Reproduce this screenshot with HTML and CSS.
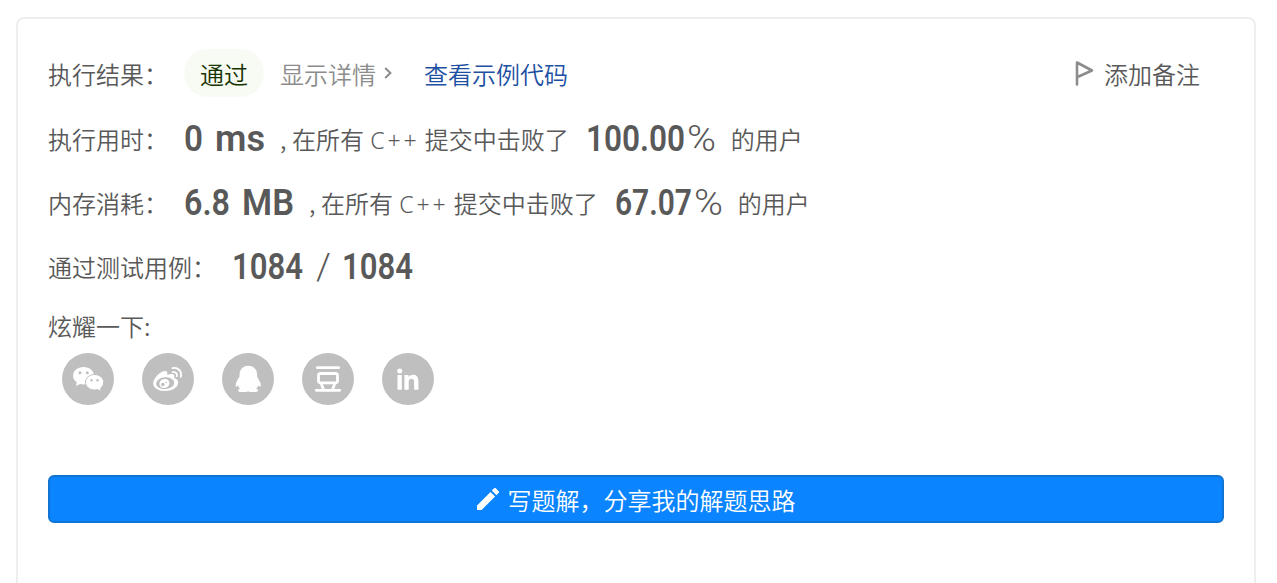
FILE: index.html
```html
<!DOCTYPE html>
<html lang="zh-CN">
<head>
    <meta charset="UTF-8">
    <meta name="viewport" content="width=device-width, initial-scale=1.0">
    <title>执行结果</title>
    <link rel="stylesheet" href="styles.css">
</head>
<body>
    <main class="result-card">
        <div class="row result-row">
            <span class="label">执行结果：</span>
            <span class="status">通过</span>
            <a class="detail-link">显示详情
                <svg class="chevron" viewBox="0 0 8 14"><path d="M1.2 2 6.4 7 1.2 12"/></svg>
            </a>
            <a class="code-link">查看示例代码</a>
            <a class="note-link">
                <svg class="flag" viewBox="0 0 20 26"><path d="M2 24.5V2.5L17 10.5 2.5 17"/></svg>
                添加备注
            </a>
        </div>

        <div class="row">
            <span class="label">执行用时：</span>
            <svg class="value" width="81" height="30"><text x="0" y="32" textLength="19" lengthAdjust="spacingAndGlyphs">0</text><text x="31" y="32" textLength="50" lengthAdjust="spacingAndGlyphs">ms</text></svg>
            <span class="desc"><span class="comma">,</span>在所有 <span class="lang">C++</span> 提交中击败了</span>
            <svg class="value" width="130" height="30"><text x="0" y="32" textLength="99" lengthAdjust="spacingAndGlyphs">100.00</text><text class="percent" x="101" y="32" textLength="29" lengthAdjust="spacingAndGlyphs">%</text></svg>
            <span class="desc">的用户</span>
        </div>

        <div class="row">
            <span class="label">内存消耗：</span>
            <svg class="value" width="110" height="30"><text x="0" y="32" textLength="46" lengthAdjust="spacingAndGlyphs">6.8</text><text x="58" y="32" textLength="52" lengthAdjust="spacingAndGlyphs">MB</text></svg>
            <span class="desc"><span class="comma">,</span>在所有 <span class="lang">C++</span> 提交中击败了</span>
            <svg class="value" width="108" height="30"><text x="0" y="32" textLength="77" lengthAdjust="spacingAndGlyphs">67.07</text><text class="percent" x="79" y="32" textLength="29" lengthAdjust="spacingAndGlyphs">%</text></svg>
            <span class="desc">的用户</span>
        </div>

        <div class="row">
            <span class="label">通过测试用例：</span>
            <svg class="value" width="182" height="30"><text x="0" y="32" textLength="71" lengthAdjust="spacingAndGlyphs">1084</text><text class="slash" x="84" y="32">/</text><text x="110" y="32" textLength="71" lengthAdjust="spacingAndGlyphs">1084</text></svg>
        </div>

        <div class="share-title">炫耀一下:</div>
        <div class="share-list">
            <a class="share-icon">
                <svg viewBox="0 0 52 52">
                    <path fill="#fff" d="M21.500 14C15.700 14 11 17.900 11 22.700c0 2.700 1.500 5 3.800 6.600L14 33l4-2c1.100.3 2.300.5 3.500.5 5.800 0 10.500-3.900 10.500-8.800S27.300 14 21.500 14z"/>
                    <path fill="#fff" stroke="#bfbfbf" stroke-width="1" d="M32.500 21.500c-5 0-9 3.400-9 7.700s4 7.800 9 7.800c1.100 0 2.200-.2 3.200-.5l3.600 2.100-.7-3.400c1.900-1.400 3.100-3.600 3.100-6 0-4.300-4.200-7.700-9.200-7.700z"/>
                    <g fill="#bfbfbf"><circle cx="18" cy="19.700" r="1.500"/><circle cx="25.300" cy="19.700" r="1.500"/><circle cx="29.500" cy="27.300" r="1.200"/><circle cx="35.500" cy="27.300" r="1.200"/></g>
                </svg>
            </a>
            <a class="share-icon">
                <svg viewBox="0 0 52 52">
                    <path fill="#fff" d="M23.500 18c1.800.2 2.200 1.600 1.500 3.800 3.500-1.300 7.300-1.400 7.500 1.200.1.700-.1 1.300-.4 2 2.700.8 4.300 2.400 4.100 5-.4 4.600-6.300 8-13.300 8-6.500 0-11.700-3.100-11.700-7.700 0-5.300 7.800-12.800 12.300-12.300z"/>
                    <ellipse cx="23.200" cy="30.200" rx="9.100" ry="5.900" fill="#bfbfbf" transform="rotate(-6 23.200 30.200)"/>
                    <ellipse cx="22.400" cy="30.500" rx="5.100" ry="4.400" fill="#fff" transform="rotate(-20 22.400 30.500)"/>
                    <circle cx="20.800" cy="31.500" r="1.800" fill="#bfbfbf"/><circle cx="24.200" cy="29.500" r=".8" fill="#bfbfbf"/>
                    <path class="line-thin" d="M30.500 15.200c5.300-1.300 9.900 3.200 8.200 8.700M30.700 19.200c2.700-.7 4.900 1.200 4.100 4"/>
                </svg>
            </a>
            <a class="share-icon">
                <svg viewBox="0 0 52 52">
                    <path fill="#fff" d="M26.300 12.700c-6.100 0-9 4.600-8.800 9.800.1 1.300-.5 1.500-.9 2.500-1.800 3-3.100 5.700-2.900 8 .1 1.100.7 1.100 2.200-.8.400 1.400 1.200 2.600 2.100 3.600-1.500.5-2 1.300-1.800 2.100.4 1.500 7.700 1.600 10 .3 2.200 1.300 9.300 1.200 9.900-.4.300-.9-.4-1.600-1.900-2.100 1-1 1.700-2.200 2.100-3.500 1.600 2 2.300 1.700 2.500.5.200-2.500-1.300-4.900-2.900-7.700-.4-.9-.9-1.300-.8-2.500.2-5.300-2.900-9.800-8.800-9.800z"/>
                </svg>
            </a>
            <a class="share-icon">
                <svg viewBox="0 0 52 52"><path class="line" d="M15.300 14.700h21.400M14.200 37.300h23.600M19.600 32l2 4.500M32.400 32l-2 4.500"/><rect class="line" x="16.500" y="20.500" width="19" height="9.300" rx="2"/></svg>
            </a>
            <a class="share-icon">
                <svg viewBox="0 0 52 52">
                    <circle cx="17.700" cy="17.900" r="2.500" fill="#fff"/>
                    <path fill="#fff" d="M15.500 22.100h4.300v14.700h-4.300zM22.400 22.100h4.200v2c2.700-3.700 9.800-3.200 9.800 3.700v9h-4.300v-8.300c0-4-5.400-3.500-5.400.2v8.100h-4.300z"/>
                </svg>
            </a>
        </div>

        <button class="write-button">
            <svg class="pencil" viewBox="3 3 18 18"><path fill="#fff" d="M3 17.250V21h3.750L17.810 9.940l-3.750-3.750L3 17.250zM20.710 7.040a1 1 0 0 0 0-1.410l-2.340-2.340a1 1 0 0 0-1.410 0l-1.830 1.830 3.750 3.750 1.830-1.830z"/></svg>
            写题解，分享我的解题思路
        </button>
    </main>
</body>
</html>
```
FILE: styles.css
```css
* {
    box-sizing: border-box;
}

body {
    margin: 0;
    padding: 17px 21px 0 16px;
    height: 100vh;
    background: #fff;
    color: #595959;
    font-family: "Noto Sans CJK SC", sans-serif;
    font-size: 24px;
    font-weight: 350;
}

.result-card {
    height: 100%;
    padding: 30px;
    border: 2px solid #eee;
    border-bottom: none;
    border-radius: 8px 8px 0 0;
}

.row {
    display: flex;
    align-items: baseline;
    height: 64px;
    line-height: 48px;
    white-space: nowrap;
}

.result-row {
    height: 66px;
    align-items: flex-start;
}

.label {
    margin-right: 16px;
}

.result-row .label,
.detail-link,
.code-link,
.note-link {
    padding-top: 1px;
}

.status {
    width: 80px;
    height: 48px;
    padding-top: 1px;
    margin-right: 16px;
    border-radius: 24px;
    background: #f8fbf4;
    color: #173300;
    text-align: center;
}

.detail-link {
    display: flex;
    align-items: center;
    width: 144px;
    color: #8c8c8c;
}

.chevron {
    width: 8px;
    height: 14px;
    margin: -2px 0 0 8px;
    fill: none;
    stroke: #8c8c8c;
    stroke-width: 2;
}

.code-link {
    color: #1d50a2;
}

.note-link {
    display: flex;
    align-items: center;
    margin: 0 24px 0 auto;
}

.flag {
    width: 20px;
    height: 26px;
    margin: -3px 9px 0 0;
    fill: none;
    stroke: #8c8c8c;
    stroke-width: 2.6;
    stroke-linejoin: round;
    stroke-linecap: round;
}

.value {
    flex: none;
    margin-right: 15px;
    overflow: visible;
    fill: #595959;
    font-family: Roboto, sans-serif;
    font-size: 37.5px;
    font-weight: 600;
}

.percent,
.slash {
    font-weight: 300;
}

.desc {
    margin-right: 17px;
}

.comma {
    display: inline-block;
    width: 12px;
}

.lang {
    margin-left: 1px;
    font-family: "Noto Sans", sans-serif;
    font-size: 23px;
    letter-spacing: 2.8px;
}

.share-title {
    padding-top: 1px;
    line-height: 36px;
}

.share-list {
    display: flex;
    gap: 28px;
    margin: 9px 0 70px 14px;
}

.share-icon {
    width: 52px;
    height: 52px;
    border-radius: 50%;
    background: #bfbfbf;
}

.share-icon svg {
    display: block;
}

.line,
.line-thin {
    fill: none;
    stroke: #fff;
    stroke-width: 2.8;
    stroke-linecap: round;
}

.line-thin {
    stroke-width: 1.8;
}

.write-button {
    display: flex;
    align-items: center;
    justify-content: center;
    width: 100%;
    height: 48px;
    padding: 0;
    border: 2px solid #1073d6;
    border-radius: 6px;
    background: #0a84ff;
    color: #fff;
    font: inherit;
}

.pencil {
    width: 22px;
    height: 22px;
    margin-right: 9px;
}
```
